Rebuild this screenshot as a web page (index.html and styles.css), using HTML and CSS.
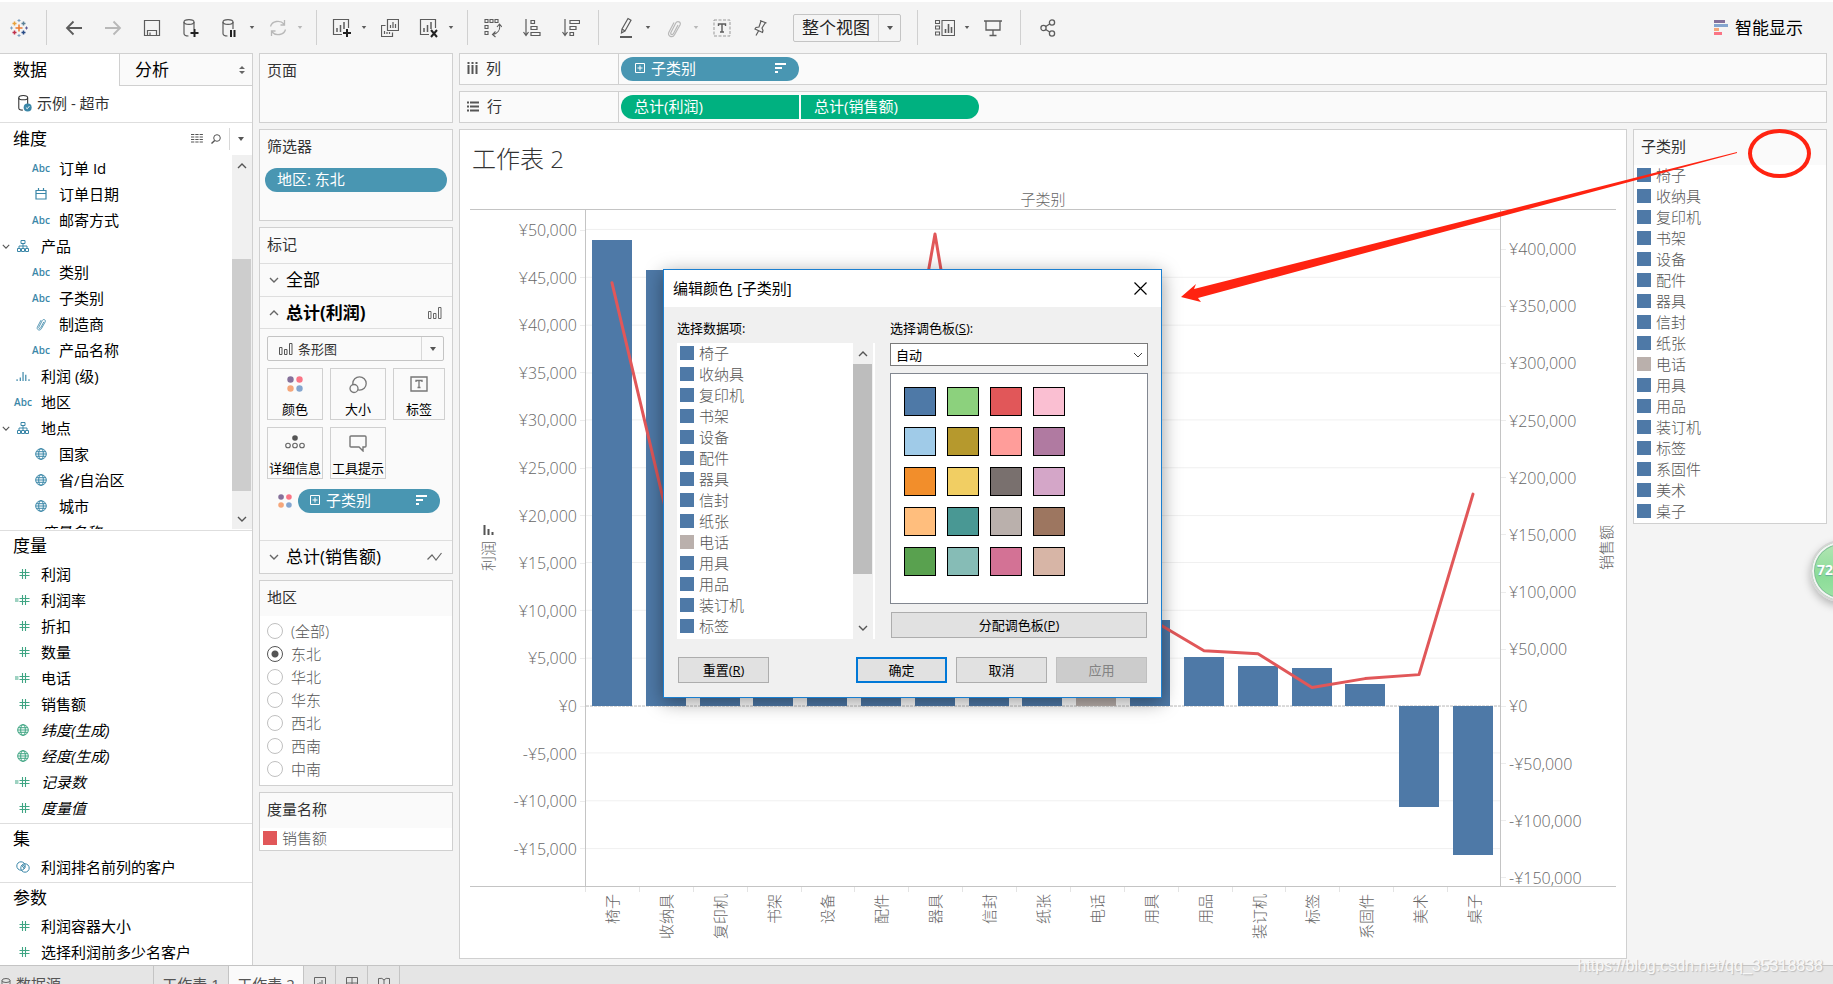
FILE: index.html
```html
<!DOCTYPE html>
<html lang="zh-CN">
<head>
<meta charset="utf-8">
<title>工作表 2</title>
<link rel="stylesheet" href="styles.css">
</head>
<body>
<svg class="symbols" aria-hidden="true">
  <symbol id="i-caret" viewBox="0 0 8 6"><path d="M1 1h6L4 5z" fill="currentColor"/></symbol>
  <symbol id="i-down" viewBox="0 0 10 6"><path d="M1 1l4 4 4-4" fill="none" stroke="currentColor" stroke-width="1.4"/></symbol>
  <symbol id="i-up" viewBox="0 0 10 6"><path d="M1 5l4-4 4 4" fill="none" stroke="currentColor" stroke-width="1.4"/></symbol>
  <symbol id="i-hash" viewBox="0 0 16 12"><path d="M7.5 1v10M10.500 1v10M4.500 4.500h10M4.500 7.500h10" stroke="currentColor" stroke-width="1.100"/></symbol>
  <symbol id="i-chash" viewBox="0 0 16 12"><path d="M7.500 1v10M10.500 1v10M4.500 4.500h10M4.500 7.500h10M0 5h3.500M0 7h3.500" stroke="currentColor" stroke-width="1.100"/></symbol>
  <symbol id="i-globe" viewBox="0 0 12 12"><g fill="none" stroke="currentColor"><circle cx="6" cy="6" r="5.300"/><ellipse cx="6" cy="6" rx="2.300" ry="5.300"/><path d="M1.500 3.700h9M.7 6h10.600M1.500 8.300h9"/></g></symbol>
  <symbol id="i-tree" viewBox="0 0 12 12"><path d="M4 .5h4v3H4zM.5 8.500h3v3h-3zM8.500 8.500h3v3h-3zM4.500 8.500h3v3h-3zM6 3.500v5M2 8.500v-2.500h8v2.500" fill="none" stroke="currentColor"/></symbol>
  <symbol id="i-cal" viewBox="0 0 12 12"><path d="M1 2.500h10v8.500H1zM1 5.500h10M3.500 0v3M8.500 0v3" fill="none" stroke="currentColor" stroke-width="1.200"/></symbol>
  <symbol id="i-clip" viewBox="0 0 16 20"><path d="M12 7L7.500 15.500c-1 2-3.500.8-2.600-1L9.800 5c1.500-2.700 5.700-1 4.200 2L8.500 16.800c-2 3.600-7.500 1.400-5.600-2.600L8 4.500" fill="none" stroke="currentColor" stroke-width="1.200"/></symbol>
  <symbol id="i-hist" viewBox="0 0 16 12"><path d="M1 9v2M4.500 7v4M7.500 1v10M10.500 4v7M14 9v2" stroke="currentColor" stroke-width="1.300"/></symbol>
  <symbol id="i-bars" viewBox="0 0 14 12"><path d="M.5 4.500h2.500v7H.5zM5.500 6.500H8v5H5.500zM10.500.5H13v11h-2.500z" fill="none" stroke="currentColor"/></symbol>
  <symbol id="i-plusbox" viewBox="0 0 10 10"><path d="M.5.5h9v9h-9zM2.500 5h5M5 2.500v5" fill="none" stroke="currentColor"/></symbol>
  <symbol id="i-sort" viewBox="0 0 11 10"><path d="M0 1h11M0 5h7M0 9h3" stroke="currentColor" stroke-width="2"/></symbol>
  <symbol id="i-dots" viewBox="0 0 16 16"><circle cx="3.500" cy="3.500" r="3.200" fill="#85709a"/><circle cx="12.500" cy="3.500" r="3.200" fill="#fa7485"/><circle cx="3.500" cy="12.500" r="3.200" fill="#f5a67a"/><circle cx="12.500" cy="12.500" r="3.200" fill="#84a5cf"/></symbol>
  <symbol id="i-db" viewBox="0 0 18 20"><path d="M2 4v11.500C2 17 4 18 6.500 18M12 4v7" fill="none" stroke="currentColor" stroke-width="1.200"/><ellipse cx="7" cy="4" rx="5" ry="2.400" fill="none" stroke="currentColor" stroke-width="1.200"/></symbol>
</svg>

<div class="app">
  <header class="toolbar">
    <button class="tool" aria-label="起始页"><svg width="18" height="18" viewBox="0 0 18 18"><g stroke-width="1.500"><path d="M9 5.500v7M5.500 9h7" stroke="#eb7b30"/><path d="M4.500 2.500v4M2.500 4.500h4" stroke="#e8a23c"/><path d="M13.500 2.500v4M11.500 4.500h4" stroke="#5a8096"/><path d="M4.500 11.500v4M2.500 13.500h4" stroke="#c0304a"/><path d="M13.500 11.500v4M11.500 13.500h4" stroke="#274a86"/><path d="M9 0v3M7.500 1.500h3M9 15v3M7.500 16.500h3M1.500 7.500v3M0 9h3" stroke="#7a9fc0" stroke-width="1"/><path d="M16.500 7.500v3M15 9h3" stroke="#5c5a95" stroke-width="1"/></g></svg></button>
    <span class="sep"></span>
    <div class="group">
      <button class="tool" aria-label="撤消"><svg width="18" height="16" viewBox="0 0 18 16"><path d="M17 8H2M8.500 1.500L2 8l6.500 6.500" fill="none" stroke="currentColor" stroke-width="1.800"/></svg></button>
      <button class="tool faint" aria-label="重做"><svg width="18" height="16" viewBox="0 0 18 16"><path d="M1 8h15M9.500 1.500L16 8l-6.500 6.500" fill="none" stroke="currentColor" stroke-width="1.800"/></svg></button>
      <button class="tool" aria-label="保存"><svg width="18" height="18" viewBox="0 0 18 18"><path d="M1.500 1.500h15v15h-15zM4.500 16.500v-5h9v5M7 13.500v3" fill="none" stroke="currentColor" stroke-width="1.200"/></svg></button>
      <button class="tool" aria-label="新建数据源"><svg width="18" height="20" viewBox="0 0 18 20"><use href="#i-db"/><path d="M12.500 11v8M8.500 15h8" stroke="#222" stroke-width="2"/></svg></button>
      <div class="split"><button class="tool" aria-label="暂停自动更新"><svg width="18" height="20" viewBox="0 0 18 20"><use href="#i-db"/><path d="M10 12v7M13.500 12v7" stroke="#222" stroke-width="2"/></svg></button><button class="caret" aria-label="更新选项"><svg width="6" height="5"><use href="#i-caret"/></svg></button></div>
      <div class="split faint"><button class="tool" aria-label="运行更新"><svg width="18" height="16" viewBox="0 0 18 16"><path d="M1.500 6.500C3 1 11 -.5 15 4M16.500 9.500C15 15 7 16.500 3 12M15.500 0v5h-4M2.500 16v-5h4" fill="none" stroke="currentColor" stroke-width="1.300"/></svg></button><button class="caret" aria-label="运行选项"><svg width="6" height="5"><use href="#i-caret"/></svg></button></div>
    </div>
    <span class="sep sep-tight"></span>
    <div class="group">
      <div class="split"><button class="tool" aria-label="新建工作表"><svg width="20" height="20" viewBox="0 0 20 20"><path d="M10 16.500H1.500v-15h15V10" fill="none" stroke="currentColor" stroke-width="1.200"/><path d="M5 14v-4M8.500 14V7M12 11V4" stroke="currentColor" stroke-width="1.500"/><path d="M15 11v8M11 15h8" stroke="#222" stroke-width="2"/></svg></button><button class="caret" aria-label="新建选项"><svg width="6" height="5"><use href="#i-caret"/></svg></button></div>
      <button class="tool" aria-label="复制工作表"><svg width="18" height="18" viewBox="0 0 18 18"><path d="M6.500.5h11v11h-11zM4.500 6.500h-4v11h11v-4M9.500 9V6M12 9V3M14.500 9V5M3.500 15v-3M6 15v-2M8.500 15v-2" fill="none" stroke="currentColor" stroke-width="1.200"/></svg></button>
      <div class="split"><button class="tool" aria-label="清除工作表"><svg width="20" height="20" viewBox="0 0 20 20"><path d="M10 16.500H1.500v-15h15V10" fill="none" stroke="currentColor" stroke-width="1.200"/><path d="M5 14v-4M8.500 14V7M12 11V4" stroke="currentColor" stroke-width="1.500"/><path d="M12 12l6 7M18 12l-6 7" stroke="#222" stroke-width="2"/></svg></button><button class="caret" aria-label="清除选项"><svg width="6" height="5"><use href="#i-caret"/></svg></button></div>
    </div>
    <span class="sep sep-tight"></span>
    <div class="group">
      <button class="tool" aria-label="交换行和列"><svg width="18" height="20" viewBox="0 0 18 20"><path d="M1 1.500h3v3H1zM6 1.500h3v3H6zM11 1.500h3v3h-3zM1 7.500h3v3H1zM1 13.500h3v3H1zM15.500 7c1 5-2 8.500-6.500 9.500M13 9l2.500-3L18 9M11.500 13.500L8.500 16.500l3 2.500" fill="none" stroke="currentColor" stroke-width="1.100"/></svg></button>
      <button class="tool" aria-label="升序"><svg width="18" height="18" viewBox="0 0 18 18"><path d="M3 0v16M.5 13L3 16.500 5.500 13M8 1.500h3.500v3H8zM8 7.500h6v3H8zM8 13.500h9v3H8z" fill="none" stroke="currentColor" stroke-width="1.200"/></svg></button>
      <button class="tool" aria-label="降序"><svg width="18" height="18" viewBox="0 0 18 18"><path d="M3 0v16M.5 13L3 16.500 5.500 13M8 1.500h9.500v3H8zM8 7.500h6v3H8zM8 13.500h3.500v3H8z" fill="none" stroke="currentColor" stroke-width="1.200"/></svg></button>
    </div>
    <span class="sep"></span>
    <div class="group">
      <div class="split"><button class="tool" aria-label="突出显示"><svg width="14" height="22" viewBox="0 0 14 22"><path d="M3 12L9 1.500l3 1.700L6 14zM3 12l-.5 4L6 14" fill="none" stroke="currentColor" stroke-width="1.200"/><path d="M1 20h12" stroke="currentColor" stroke-width="2"/></svg></button><button class="caret" aria-label="突出显示选项"><svg width="6" height="5"><use href="#i-caret"/></svg></button></div>
      <div class="split faint"><button class="tool" aria-label="组成员"><svg width="16" height="20"><use href="#i-clip"/></svg></button><button class="caret" aria-label="组选项"><svg width="6" height="5"><use href="#i-caret"/></svg></button></div>
      <button class="tool" aria-label="显示标记标签"><svg width="18" height="18" viewBox="0 0 18 18"><path d="M1 1h16v16H1z" fill="none" stroke="#999" stroke-dasharray="3 1.500"/><path d="M5.500 7V5h7v2M9 5v8M7 13h4" fill="none" stroke="currentColor" stroke-width="1.400"/></svg></button>
      <button class="tool" aria-label="固定轴"><svg width="16" height="18" viewBox="0 0 16 18"><path d="M7 1.500l6.500 2.500M8 2L6 8 3 8.500 2 10l7.500 3.500.5-2-1-2.500 3.500-5.500M5.500 12L3 16.500" fill="none" stroke="currentColor" stroke-width="1.200"/></svg></button>
    </div>
    <label class="fit"><select aria-label="视图适应方式"><option>整个视图</option></select><span class="fit-arrow"><svg width="8" height="6"><use href="#i-caret"/></svg></span></label>
    <span class="sep"></span>
    <div class="group">
      <div class="split"><button class="tool" aria-label="显示隐藏卡"><svg width="20" height="18" viewBox="0 0 20 18"><path d="M.5 1.500h4v3h-4zM.5 7h4v3h-4zM.5 13h4v3h-4zM7 1.500h12.500v15H7z" fill="none" stroke="currentColor" stroke-width="1.100"/><path d="M10.500 14v-4M13.500 14V5M16.500 14V8" stroke="currentColor" stroke-width="1.600"/></svg></button><button class="caret" aria-label="卡选项"><svg width="6" height="5"><use href="#i-caret"/></svg></button></div>
      <button class="tool" aria-label="演示模式"><svg width="18" height="18" viewBox="0 0 18 18"><path d="M0 2h18M2 2v9h14V2M9 11v5M5.500 16.500h7" fill="none" stroke="currentColor" stroke-width="1.300"/></svg></button>
    </div>
    <span class="sep"></span>
    <button class="tool" aria-label="共享"><svg width="16" height="18" viewBox="0 0 16 18"><g fill="none" stroke="currentColor" stroke-width="1.300"><circle cx="3.500" cy="9" r="2.600"/><circle cx="12" cy="3.500" r="2.600"/><circle cx="12" cy="14.500" r="2.600"/><path d="M5.700 7.500l4-2.500M5.700 10.500l4 2.500"/></g></svg></button>
    <button class="showme"><svg width="14" height="16" viewBox="0 0 14 16"><path fill="#85709a" d="M0 0h11v3H0z"/><path fill="#84a5cf" d="M0 4h14v3H0z"/><path fill="#f5a67a" d="M0 8h5v3H0z"/><path fill="#fa7485" d="M0 12h8v3H0z"/></svg>智能显示</button>
  </header>

  <main class="body">
    <aside class="data">
      <div class="tabs">
        <button class="tab active">数据</button>
        <button class="tab">分析<svg width="6" height="8" viewBox="0 0 6 8"><path d="M0 3l3-3 3 3zM0 5h6L3 8z" fill="#666"/></svg></button>
      </div>
      <div class="source"><svg width="16" height="18" viewBox="0 0 18 20"><use href="#i-db"/><circle cx="12" cy="15" r="4.500" fill="#3b87a8"/><path d="M10 15l1.500 1.500 2.500-3" stroke="#fff" fill="none"/></svg>示例 - 超市</div>
      <section class="dims">
        <div class="dims-head"><h2>维度</h2><span class="dims-tools">
          <button aria-label="查看数据"><svg width="12" height="10" viewBox="0 0 12 10"><path d="M0 .5h12M0 3h12M0 5.500h12M0 8h12" stroke="#555" stroke-dasharray="3.300 1" stroke-width="1.100"/></svg></button>
          <button aria-label="查找字段"><svg width="10" height="10" viewBox="0 0 10 10"><circle cx="6" cy="4" r="3.300" fill="none" stroke="#555"/><path d="M3.700 6.500L.5 9.500" stroke="#555" stroke-width="1.400"/></svg></button>
          <button class="menu" aria-label="维度菜单"><svg width="8" height="6"><use href="#i-caret"/></svg></button></span></div>
        <div class="dims-body">
          <ul class="fields">
            <li class="child"><b>Abc</b>订单 Id</li>
            <li class="child"><b><svg width="12" height="12"><use href="#i-cal"/></svg></b>订单日期</li>
            <li class="child"><b>Abc</b>邮寄方式</li>
            <li><svg class="fold" width="8" height="5"><use href="#i-down"/></svg><b><svg width="12" height="12"><use href="#i-tree"/></svg></b>产品</li>
            <li class="child"><b>Abc</b>类别</li>
            <li class="child"><b>Abc</b>子类别</li>
            <li class="child"><b><svg width="12" height="14"><use href="#i-clip"/></svg></b>制造商</li>
            <li class="child"><b>Abc</b>产品名称</li>
            <li><b><svg width="15" height="11"><use href="#i-hist"/></svg></b>利润 (级)</li>
            <li><b>Abc</b>地区</li>
            <li><svg class="fold" width="8" height="5"><use href="#i-down"/></svg><b><svg width="12" height="12"><use href="#i-tree"/></svg></b>地点</li>
            <li class="child"><b><svg width="12" height="12"><use href="#i-globe"/></svg></b>国家</li>
            <li class="child"><b><svg width="12" height="12"><use href="#i-globe"/></svg></b>省/自治区</li>
            <li class="child"><b><svg width="12" height="12"><use href="#i-globe"/></svg></b>城市</li>
            <li><b></b><i>度量名称</i></li>
          </ul>
          <div class="scroll"><button aria-label="向上滚动"><svg width="10" height="6"><use href="#i-up"/></svg></button><span class="thumb"></span><button aria-label="向下滚动"><svg width="10" height="6"><use href="#i-down"/></svg></button></div>
        </div>
      </section>
      <section class="block">
        <h2>度量</h2>
        <ul class="fields green">
          <li><b><svg width="16" height="12"><use href="#i-hash"/></svg></b>利润</li>
          <li><b><svg width="16" height="12"><use href="#i-chash"/></svg></b>利润率</li>
          <li><b><svg width="16" height="12"><use href="#i-hash"/></svg></b>折扣</li>
          <li><b><svg width="16" height="12"><use href="#i-hash"/></svg></b>数量</li>
          <li><b><svg width="16" height="12"><use href="#i-chash"/></svg></b>电话</li>
          <li><b><svg width="16" height="12"><use href="#i-hash"/></svg></b>销售额</li>
          <li><b><svg width="12" height="12"><use href="#i-globe"/></svg></b><i>纬度(生成)</i></li>
          <li><b><svg width="12" height="12"><use href="#i-globe"/></svg></b><i>经度(生成)</i></li>
          <li><b><svg width="16" height="12"><use href="#i-chash"/></svg></b><i>记录数</i></li>
          <li><b><svg width="16" height="12"><use href="#i-hash"/></svg></b><i>度量值</i></li>
        </ul>
      </section>
      <section class="block">
        <h2>集</h2>
        <ul class="fields">
          <li><b><svg width="14" height="12" viewBox="0 0 14 12"><g fill="none" stroke="currentColor"><circle cx="5" cy="5" r="4.200"/><circle cx="9" cy="7" r="4.200"/><path d="M5.500 4l3 4M7 3.500l2 3"/></g></svg></b>利润排名前列的客户</li>
        </ul>
      </section>
      <section class="block">
        <h2>参数</h2>
        <ul class="fields green">
          <li><b><svg width="16" height="12"><use href="#i-hash"/></svg></b>利润容器大小</li>
          <li><b><svg width="16" height="12"><use href="#i-hash"/></svg></b>选择利润前多少名客户</li>
        </ul>
      </section>
    </aside>

    <aside class="cards">
      <section class="card pages"><h3>页面</h3></section>
      <section class="card filters"><h3>筛选器</h3><button class="pill">地区: 东北</button></section>
      <section class="card marks">
        <h3>标记</h3>
        <button class="mark-row"><svg width="10" height="6"><use href="#i-down"/></svg>全部</button>
        <button class="mark-row current"><svg width="10" height="6"><use href="#i-up"/></svg>总计(利润)<svg class="kind" width="14" height="12"><use href="#i-bars"/></svg></button>
        <div class="mark-body">
          <label class="mark-type"><svg width="14" height="12"><use href="#i-bars"/></svg><select aria-label="标记类型"><option>条形图</option></select><span class="fit-arrow"><svg width="8" height="6"><use href="#i-caret"/></svg></span></label>
          <div class="mark-grid">
            <button><svg width="16" height="16"><use href="#i-dots"/></svg>颜色</button>
            <button><svg width="18" height="18" viewBox="0 0 18 18"><g fill="#fafafa" stroke="#777" stroke-width="1.300"><circle cx="10.500" cy="7.500" r="6.700"/><circle cx="5" cy="12.500" r="4"/></g></svg>大小</button>
            <button><svg width="18" height="16" viewBox="0 0 18 16"><path d="M1 1h16v14H1z" fill="none" stroke="#777" stroke-width="1.400"/><path d="M6 6V4.500h6V6M9 4.500V11M7.500 11.500h3" fill="none" stroke="#777" stroke-width="1.300"/></svg>标签</button>
            <button><svg width="20" height="14" viewBox="0 0 20 14"><circle cx="10" cy="3" r="2.800" fill="#555"/><g fill="none" stroke="#666" stroke-width="1.100"><circle cx="3" cy="10.500" r="2.300"/><circle cx="10" cy="10.500" r="2.300"/><circle cx="17" cy="10.500" r="2.300"/></g></svg>详细信息</button>
            <button><svg width="18" height="17" viewBox="0 0 18 17"><path d="M2 1h14q1 0 1 1v9q0 1-1 1h-2v4l-4-4H2q-1 0-1-1V2q0-1 1-1z" fill="none" stroke="#777" stroke-width="1.400"/></svg>工具提示</button>
          </div>
          <div class="mark-field"><svg width="14" height="14"><use href="#i-dots"/></svg><button class="pill"><svg width="10" height="10"><use href="#i-plusbox"/></svg>子类别<svg class="end" width="11" height="10"><use href="#i-sort"/></svg></button></div>
        </div>
        <button class="mark-row"><svg width="10" height="6"><use href="#i-down"/></svg>总计(销售额)<svg class="kind" width="15" height="10" viewBox="0 0 15 10"><path d="M.5 7.500L5 3l4 5 5.500-7" fill="none" stroke="currentColor" stroke-width="1.200"/></svg></button>
      </section>
      <fieldset class="card region">
        <h3>地区</h3>
        <div class="radios">
          <label><input type="radio" name="region">(全部)</label>
          <label><input type="radio" name="region" checked>东北</label>
          <label><input type="radio" name="region">华北</label>
          <label><input type="radio" name="region">华东</label>
          <label><input type="radio" name="region">西北</label>
          <label><input type="radio" name="region">西南</label>
          <label><input type="radio" name="region">中南</label>
        </div>
      </fieldset>
      <section class="card names"><h3>度量名称</h3><ul class="legend"><li class="red">销售额</li></ul></section>
    </aside>

    <div class="work">
      <div class="shelf"><div class="shelf-name"><svg width="11" height="12" viewBox="0 0 11 12"><path d="M1.500 0v12M5.500 0v12M9.500 0v12" stroke="#555" stroke-width="2" stroke-dasharray="2 1 9 0"/></svg>列</div><div class="pills"><button class="pill"><svg width="10" height="10"><use href="#i-plusbox"/></svg>子类别<svg class="end" width="11" height="10"><use href="#i-sort"/></svg></button></div></div>
      <div class="shelf"><div class="shelf-name"><svg width="12" height="11" viewBox="0 0 12 11"><path d="M0 1.500h12M0 5.500h12M0 9.500h12" stroke="#555" stroke-width="2" stroke-dasharray="2 1 9 0"/></svg>行</div><div class="pills"><button class="pill measure first">总计(利润)</button><button class="pill measure last">总计(销售额)</button></div></div>
      <div class="canvas">
        <section class="sheet">
          <h1>工作表 2</h1>
          <div class="chart">
            <div class="col-title">子类别</div>
            <div class="axis left">
              <div class="axis-name"><svg width="11" height="10" viewBox="0 0 11 10"><path d="M1.500 0v10M5.500 4v6M9.500 7v3" stroke="#555" stroke-width="2"/></svg><span class="turn">利润</span></div>
              <div class="ticks"><span>¥50,000</span><span>¥45,000</span><span>¥40,000</span><span>¥35,000</span><span>¥30,000</span><span>¥25,000</span><span>¥20,000</span><span>¥15,000</span><span>¥10,000</span><span>¥5,000</span><span>¥0</span><span>-¥5,000</span><span>-¥10,000</span><span>-¥15,000</span></div>
            </div>
            <div class="plot">
              <svg viewBox="0 0 914 678" preserveAspectRatio="none" role="img" aria-label="各子类别利润与销售额">
                <path class="grid" d="M0 19.500h914M0 67.500h914M0 115.500h914M0 163.500h914M0 210.500h914M0 258.500h914M0 306.500h914M0 353.500h914M0 401.500h914M0 449.500h914M0 544.500h914M0 592.500h914M0 640.500h914"/>
                <path class="zero" d="M0 497.500h914"/>
                <g class="bars">
                  <rect x="6" y="30" width="40" height="467"/><rect x="60" y="60" width="40" height="437"/><rect x="114" y="150" width="40" height="347"/><rect x="167" y="180" width="40" height="317"/><rect x="221" y="230" width="40" height="267"/><rect x="275" y="260" width="40" height="237"/><rect x="329" y="290" width="40" height="207"/><rect x="383" y="330" width="40" height="167"/><rect x="436" y="350" width="40" height="147"/><rect class="muted" x="490" y="380" width="40" height="117"/><rect x="544" y="411" width="40" height="86"/><rect x="598" y="448" width="40" height="49"/><rect x="652" y="457" width="40" height="40"/><rect x="706" y="459" width="40" height="38"/><rect x="759" y="475" width="40" height="22"/><rect x="813" y="497" width="40" height="102"/><rect x="867" y="497" width="40" height="150"/>
                </g>
                <polyline class="sales" points="26,73 80,302 134,240 187,200 241,350 295,330 349,24 403,348 456,400 510,220 564,410 618,442 672,445 726,479 779,470 833,466 887,285"/>
              </svg>
            </div>
            <div class="axis right">
              <div class="ticks"><span>¥400,000</span><span>¥350,000</span><span>¥300,000</span><span>¥250,000</span><span>¥200,000</span><span>¥150,000</span><span>¥100,000</span><span>¥50,000</span><span>¥0</span><span>-¥50,000</span><span>-¥100,000</span><span>-¥150,000</span></div>
              <div class="axis-name"><span class="turn">销售额</span></div>
            </div>
            <div class="xlabels"><span>椅子</span><span>收纳具</span><span>复印机</span><span>书架</span><span>设备</span><span>配件</span><span>器具</span><span>信封</span><span>纸张</span><span>电话</span><span>用具</span><span>用品</span><span>装订机</span><span>标签</span><span>系固件</span><span>美术</span><span>桌子</span></div>
          </div>
        </section>
        <section class="card color-legend"><h3>子类别</h3>
          <ul class="legend"><li>椅子</li><li>收纳具</li><li>复印机</li><li>书架</li><li>设备</li><li>配件</li><li>器具</li><li>信封</li><li>纸张</li><li class="muted">电话</li><li>用具</li><li>用品</li><li>装订机</li><li>标签</li><li>系固件</li><li>美术</li><li>桌子</li></ul>
        </section>
      </div>
    </div>
  </main>

  <footer class="sheets">
    <button class="source-tab"><svg width="10" height="13" viewBox="0 0 10 13"><ellipse cx="5" cy="2.500" rx="4" ry="2" fill="none" stroke="#666"/><path d="M1 2.500v8c0 2.500 8 2.500 8 0v-8" fill="none" stroke="#666"/></svg>数据源</button>
    <button class="sheet-tab">工作表 1</button>
    <button class="sheet-tab active">工作表 2</button>
    <button class="new-tab" aria-label="新建工作表"><svg width="12" height="12" viewBox="0 0 12 12"><path d="M.5.5h11v11H.5zM4 9V6M6 9V5M8 9V3" fill="none" stroke="#666"/></svg></button>
    <button class="new-tab" aria-label="新建仪表板"><svg width="12" height="12" viewBox="0 0 12 12"><path d="M.5.5h11v11H.5zM6 .5v11M.5 6h11" fill="none" stroke="#666"/></svg></button>
    <button class="new-tab" aria-label="新建故事"><svg width="12" height="12" viewBox="0 0 12 12"><path d="M.5 1.500q4-1 5.500 1.500Q7.500.5 11.500 1.500v10H.5zM6 3v8" fill="none" stroke="#666"/></svg></button>
  </footer>
</div>

<div class="dialog" role="dialog" aria-labelledby="dlg-title">
  <div class="dialog-head"><h2 id="dlg-title">编辑颜色 [子类别]</h2><button aria-label="关闭"><svg width="13" height="13" viewBox="0 0 13 13"><path d="M.5.5l12 12M12.500.5l-12 12" stroke="#000" stroke-width="1.200"/></svg></button></div>
  <div class="dialog-body">
    <div class="items">
      <p>选择数据项:</p>
      <div class="item-box">
        <ul class="legend"><li>椅子</li><li>收纳具</li><li>复印机</li><li>书架</li><li>设备</li><li>配件</li><li>器具</li><li>信封</li><li>纸张</li><li class="muted">电话</li><li>用具</li><li>用品</li><li>装订机</li><li>标签</li></ul>
        <div class="scroll"><button aria-label="向上滚动"><svg width="10" height="6"><use href="#i-up"/></svg></button><span class="thumb"></span><button aria-label="向下滚动"><svg width="10" height="6"><use href="#i-down"/></svg></button></div>
      </div>
    </div>
    <div class="palette">
      <label for="palette-name">选择调色板(<u>S</u>):</label>
      <div class="combo"><select id="palette-name"><option>自动</option></select><svg width="10" height="6" viewBox="0 0 10 6"><path d="M1 1l4 4 4-4" fill="none" stroke="#444"/></svg></div>
      <div class="colors">
        <button class="c1" aria-label="蓝色"></button><button class="c2" aria-label="浅绿"></button><button class="c3" aria-label="红色"></button><button class="c4" aria-label="浅粉"></button>
        <button class="c5" aria-label="浅蓝"></button><button class="c6" aria-label="橄榄"></button><button class="c7" aria-label="浅红"></button><button class="c8" aria-label="紫色"></button>
        <button class="c9" aria-label="橙色"></button><button class="c10" aria-label="黄色"></button><button class="c11" aria-label="深灰"></button><button class="c12" aria-label="浅紫"></button>
        <button class="c13" aria-label="浅橙"></button><button class="c14" aria-label="青色"></button><button class="c15" aria-label="灰色"></button><button class="c16" aria-label="棕色"></button>
        <button class="c17" aria-label="绿色"></button><button class="c18" aria-label="浅青"></button><button class="c19" aria-label="粉色"></button><button class="c20" aria-label="浅棕"></button>
      </div>
      <button class="btn assign">分配调色板(<u>P</u>)</button>
    </div>
  </div>
  <div class="dialog-foot"><button class="btn reset">重置(<u>R</u>)</button><button class="btn ok">确定</button><button class="btn">取消</button><button class="btn" disabled>应用</button></div>
</div>

<svg class="arrow" width="560" height="160" viewBox="0 0 560 160" aria-hidden="true"><path d="M557 12L14 149l2-5-15 13 20 5-3-4 L557 13z" fill="#ff2311"/></svg>
<span class="ring"></span>
<span class="bubble">72</span>
<span class="watermark">https://blog.csdn.net/qq_35318838</span>
</body>
</html>
```
FILE: styles.css
```css
* { box-sizing: border-box; }
html, body { height: 100%; margin: 0; }
body {
  position: relative;
  overflow: hidden;
  background: #f4f4f4;
  color: #000;
  font: 15px/20px "Open Sans", "Noto Sans CJK SC", sans-serif;
}
h1, h2, h3, p, ul { margin: 0; padding: 0; font-weight: 400; }
ul { list-style: none; }
button, select, input { font: inherit; color: inherit; margin: 0; }
button { display: flex; align-items: center; padding: 0; border: 0; background: none; white-space: nowrap; }
select { appearance: none; border: 0; background: none; padding: 0; }
svg { flex: none; display: block; }
.symbols { position: absolute; width: 0; height: 0; }

.app { display: grid; grid-template-rows: 53px minmax(0, 1fr) 19px; height: 100%; }

/* toolbar */
.toolbar { display: flex; align-items: center; padding: 0 30px 0 8px; border-top: 2px solid #fff; color: #5c5c5c; }
.tool { width: 22px; height: 28px; justify-content: center; }
.caret { width: 8px; height: 28px; justify-content: center; }
.group { display: flex; align-items: center; gap: 17px; }
.split { display: flex; gap: 7px; margin-right: -6px; }
.split:last-child { margin-right: 0; }
.faint { color: #b8b8b8; }
.sep { width: 1px; height: 35px; margin: 0 16px; background: #d0d0d0; }
.sep-tight { margin: 0 14px 0 12px; }
.fit { display: flex; width: 108px; height: 28px; margin-left: 21px; border: 1px solid #c4c4c4; border-radius: 2px; color: #222; }
.fit select { flex: 1; min-width: 0; padding-left: 8px; font-size: 17px; }
.fit-arrow { display: grid; place-items: center; width: 22px; border-left: 1px solid #d8d8d8; color: #555; pointer-events: none; }
.showme { gap: 7px; margin-left: auto; font-size: 17px; color: #000; }

.body { display: flex; min-height: 0; }

/* data pane */
.data { display: flex; flex-direction: column; width: 253px; background: #fff; border-right: 1px solid #d0d0d0; }
.tabs { display: flex; height: 33px; }
.tab { flex: 1; padding: 0 7px 0 15px; justify-content: space-between; border: solid #d0d0d0; border-width: 1px 0 1px 1px; background: #fafafa; font-size: 17px; }
.tab.active { flex: 0 0 119px; padding-left: 13px; border-width: 1px 0 0; background: #fff; }
.source { display: flex; align-items: center; gap: 4px; height: 37px; padding: 0 0 2px 17px; border-bottom: 1px solid #dedede; color: #333; }
.data h2 { font-size: 17px; line-height: 30px; padding-left: 13px; }
.dims { flex: 1; min-height: 0; display: flex; flex-direction: column; }
.dims-head { display: flex; justify-content: space-between; align-items: center; height: 32px; }
.dims-tools { display: flex; align-items: center; gap: 8px; color: #555; }
.dims-tools .menu { width: 23px; height: 22px; justify-content: center; border-left: 1px solid #d8d8d8; }
.dims-body { flex: 1; min-height: 0; display: flex; overflow: hidden; margin-bottom: 1px; }
.dims-body .fields { flex: 1; }
.block { border-top: 1px solid #dedede; padding-bottom: 2px; }
.block:last-child { padding-bottom: 0; }
.fields li { position: relative; display: flex; align-items: center; height: 26px; padding-left: 13px; white-space: nowrap; }
.fields .child { padding-left: 31px; }
.fields b { display: grid; place-items: center; width: 20px; margin-right: 8px; color: #3b87a8; font: 600 10px/12px "Open Sans", sans-serif; }
.fields .fold { position: absolute; left: 2px; color: #555; }
.fields.green b { color: #3fa583; }
.scroll { display: flex; flex-direction: column; flex: none; width: 20px; background: #f0f0f0; color: #555; }
.scroll button { height: 21px; justify-content: center; }
.scroll .thumb { background: #cdcdcd; margin-right: 1px; }
.dims-body .scroll button:last-child { margin-top: auto; }
.dims-body .thumb { height: 62%; margin-top: 83px; }

/* cards */
.cards { display: flex; flex-direction: column; gap: 6px; width: 194px; margin-left: 6px; }
.card { min-width: 0; margin: 0; padding: 0; border: 1px solid #d0d0d0; background: #fafafa; }
.card h3 { padding: 6px 7px 9px; color: #333; font-size: 15px; line-height: 20px; }
.pages { height: 70px; }
.filters { height: 92px; }
.pill { height: 24px; padding: 0 13px 2px 12px; gap: 6px; border-radius: 12px; background: #4996b2; color: #fff; }
.pill .end { margin-left: auto; }
.filters .pill { width: calc(100% - 10px); margin: 3px 5px; }
.mark-row { width: 100%; height: 33px; padding: 0 10px 0 9px; gap: 7px; border-top: 1px solid #dedede; font-size: 17px; }
.mark-row svg { color: #666; }
.mark-row.current { font-weight: 700; border-bottom: 1px solid #dedede; }
.mark-row .kind { margin-left: auto; }
.mark-body { height: 211px; padding: 7px; }
.mark-type { display: flex; align-items: center; height: 25px; margin-right: 1px; border: 1px solid #c4c4c4; border-radius: 2px; padding-left: 11px; gap: 5px; color: #555; font-size: 13px; }
.mark-type select { flex: 1; min-width: 0; color: #333; }
.mark-type .fit-arrow { align-self: stretch; }
.mark-grid { display: grid; grid-template-columns: 56px 56px 52px; grid-auto-rows: 52px; gap: 11px 7px; margin-top: 7px; }
.mark-grid { row-gap: 7px; }
.mark-grid button { flex-direction: column; justify-content: space-between; padding: 7px 0 0; border: 1px solid #d0d0d0; font-size: 13px; line-height: 20px; }
.mark-field { display: flex; align-items: center; gap: 6px; margin: 10px 5px 0 11px; }
.mark-field .pill { flex: 1; }
.radios { display: flex; flex-direction: column; padding: 3px 7px 5px; background: #fff; }
.radios label { display: flex; align-items: center; gap: 8px; height: 23px; color: #555; font-weight: 300; }
.radios input { appearance: none; width: 16px; height: 16px; border: 1px solid #c0c0c0; border-radius: 50%; background: #fff; }
.radios input:checked { border-color: #555; background: radial-gradient(circle, #555 3px, #fff 4px); }
.legend { background: #fff; padding: 0 0 1px 3px; }
.legend li { display: flex; align-items: center; gap: 5px; height: 21px; padding-bottom: 1px; color: #555; font-weight: 300; white-space: nowrap; }
.legend li::before { content: ""; width: 14px; height: 14px; background: #4e79a7; }
.legend .muted::before { background: #bab0ac; }
.legend .red::before { background: #e15759; }

/* shelves and sheet */
.work { flex: 1; min-width: 0; display: flex; flex-direction: column; gap: 6px; margin: 0 6px 0 6px; }
.shelf { display: flex; height: 32px; border: 1px solid #d0d0d0; background: #fafafa; }
.shelf-name { display: flex; align-items: center; gap: 8px; width: 159px; padding: 0 0 2px 7px; border-right: 1px solid #d0d0d0; color: #333; }
.pills { display: flex; gap: 2px; padding: 3px 2px; }
.pills .pill { width: 178px; padding-left: 14px; }
.pills .measure { padding-left: 13px; background: #00b180; }
.pills .first { border-radius: 12px 0 0 12px; }
.pills .last { border-radius: 0 12px 12px 0; }
.canvas { flex: 1; min-height: 0; display: flex; align-items: flex-start; gap: 6px; }
.sheet { flex: 1; min-width: 0; align-self: stretch; display: flex; flex-direction: column; margin-bottom: 6px; border: 1px solid #d0d0d0; background: #fff; }
.sheet h1 { padding: 0 12px 2px; font-size: 24px; line-height: 57px; font-weight: 300; color: #333; }
.color-legend { width: 194px; }
.chart { flex: 1; min-height: 0; display: grid; grid-template: 20px minmax(0, 1fr) 71px / 115px minmax(0, 1fr) 115px; margin: 0 10px; color: #666; font-weight: 300; }
.col-title { grid-column: 2; text-align: center; }
.axis { display: flex; justify-content: space-between; min-height: 0; border: solid #c4c4c4; border-width: 1px 0; }
.axis.left { grid-area: 2 / 1; }
.axis.right { grid-area: 2 / 3; }
.plot { grid-area: 2 / 2; min-width: 0; min-height: 0; border: 1px solid #c4c4c4; }
.plot svg { width: 100%; height: 100%; }
.ticks { display: flex; flex-direction: column; justify-content: space-between; font-size: 16px; line-height: 16px; white-space: nowrap; }
.ticks span { display: flex; align-items: center; gap: 3px; }
.left .ticks { padding: 12px 0 29px; }
.left .ticks span { justify-content: flex-end; }
.right .ticks { padding-top: 31px; }
.left .ticks span::after, .right .ticks span::before { content: ""; width: 5px; height: 1px; background: #ececec; }
.axis-name { display: flex; flex-direction: column; align-items: center; justify-content: center; gap: 6px; width: 36px; }
.right .axis-name { width: 20px; }
.turn, .xlabels span { writing-mode: vertical-rl; text-orientation: sideways; transform: rotate(180deg); }
.xlabels { grid-area: 3 / 2; display: grid; grid-template-columns: repeat(17, 1fr); background: repeating-linear-gradient(90deg, #e4e4e4 0 1px, transparent 1px calc(100% / 17)) 0 0 / 100% 5px no-repeat; }
.xlabels span { justify-self: center; align-self: start; margin-top: 7px; }
.grid { stroke: #f0f0f0; shape-rendering: crispEdges; }
.zero { stroke: #b8b8b8; stroke-dasharray: 3 1; shape-rendering: crispEdges; }
.bars { fill: #4e79a7; shape-rendering: crispEdges; }
.bars .muted { fill: #bab0ac; }
.sales { fill: none; stroke: #e15759; stroke-width: 3; stroke-linejoin: round; stroke-linecap: round; vector-effect: non-scaling-stroke; }

/* sheet tabs */
.sheets { display: flex; overflow: hidden; background: #e5e5e5; border-top: 1px solid #c4c4c4; color: #555; }
.sheets button { height: 36px; border-right: 1px solid #c4c4c4; justify-content: center; }
.sheets .source-tab { width: 154px; padding-left: 1px; gap: 5px; justify-content: flex-start; }
.sheets .sheet-tab { width: 75px; }
.sheets .active { background: #fafafa; }
.sheets .new-tab { width: 32px; padding-bottom: 2px; }

/* colour dialog */
.dialog { position: absolute; left: 663px; top: 269px; width: 499px; border: 1px solid #1a7fd0; background: #f0f0f0; box-shadow: 0 4px 18px rgba(0, 0, 0, .4); font-size: 13px; }
.dialog-head { display: flex; align-items: center; justify-content: space-between; height: 37px; padding: 0 14px 1px 9px; background: #fff; }
.dialog-head h2 { font-size: 15px; }
.dialog-body { display: flex; justify-content: space-between; padding: 11px 13px 0; }
.dialog-body p, .dialog-body label { display: block; line-height: 20px; margin-bottom: 5px; }
.items { width: 198px; }
.item-box { display: flex; height: 296px; background: #fff; }
.item-box .legend { flex: 1; font-size: 15px; }
.item-box .scroll { margin-right: 2px; }
.item-box .thumb { height: 210px; background: #bdbdbd; }
.item-box .scroll button:last-child { margin-top: auto; height: 22px; }
.palette { width: 258px; }
.combo { display: flex; align-items: center; height: 23px; padding: 0 4px 0 5px; border: 1px solid #7a7a7a; background: #fff; }
.combo select { flex: 1; }
.colors { display: grid; grid-template-columns: repeat(4, 32px); grid-auto-rows: 29px; gap: 11px; height: 231px; margin-top: 7px; padding: 13px; border: 1px solid #828790; background: #fff; }
.colors button { border: 1px solid #000; }
.btn { justify-content: center; width: 91px; height: 26px; border: 1px solid #adadad; background: #e1e1e1; }
.btn.assign { width: auto; margin: 8px 1px 0; min-width: 256px; }
.btn.ok { border: 2px solid #0078d7; }
.btn:disabled { background: #ccc; border-color: #bfbfbf; color: #838383; }
.dialog-foot { display: flex; gap: 9px; padding: 18px 14px 14px; }
.reset { margin-right: auto; }
.c1 { background: #4e79a7; } .c2 { background: #8cd17d; } .c3 { background: #e15759; } .c4 { background: #fabfd2; }
.c5 { background: #a0cbe8; } .c6 { background: #b6992d; } .c7 { background: #ff9d9a; } .c8 { background: #b07aa1; }
.c9 { background: #f28e2b; } .c10 { background: #f1ce63; } .c11 { background: #79706e; } .c12 { background: #d4a6c8; }
.c13 { background: #ffbe7d; } .c14 { background: #499894; } .c15 { background: #bab0ac; } .c16 { background: #9d7660; }
.c17 { background: #59a14f; } .c18 { background: #86bcb6; } .c19 { background: #d37295; } .c20 { background: #d7b5a6; }

/* overlays */
.arrow { position: absolute; left: 1180px; top: 140px; overflow: visible; }
.ring { position: absolute; left: 1748px; top: 129px; width: 63px; height: 49px; border: 4px solid #ff2311; border-radius: 50%; }
.bubble { position: absolute; left: 1810px; top: 540px; width: 62px; height: 62px; border: 2px solid #d5d5d5; border-radius: 50%; padding-left: 5px; background: linear-gradient(#b5e6b5, #8bdc98 60%, #9fe3a6); box-shadow: inset 0 0 0 2px #f4f4f4, inset 0 0 0 3px #7fc095, 0 4px 8px rgba(0, 0, 0, .25); color: #fff; font: 700 14px/56px "Open Sans", sans-serif; text-shadow: 0 1px 1px #6a9; }
.watermark { position: absolute; right: 10px; bottom: 8px; color: #f8f8f8; font: 16px/20px "Liberation Sans", sans-serif; text-shadow: 1px 1px 1px #bbb; }
```
